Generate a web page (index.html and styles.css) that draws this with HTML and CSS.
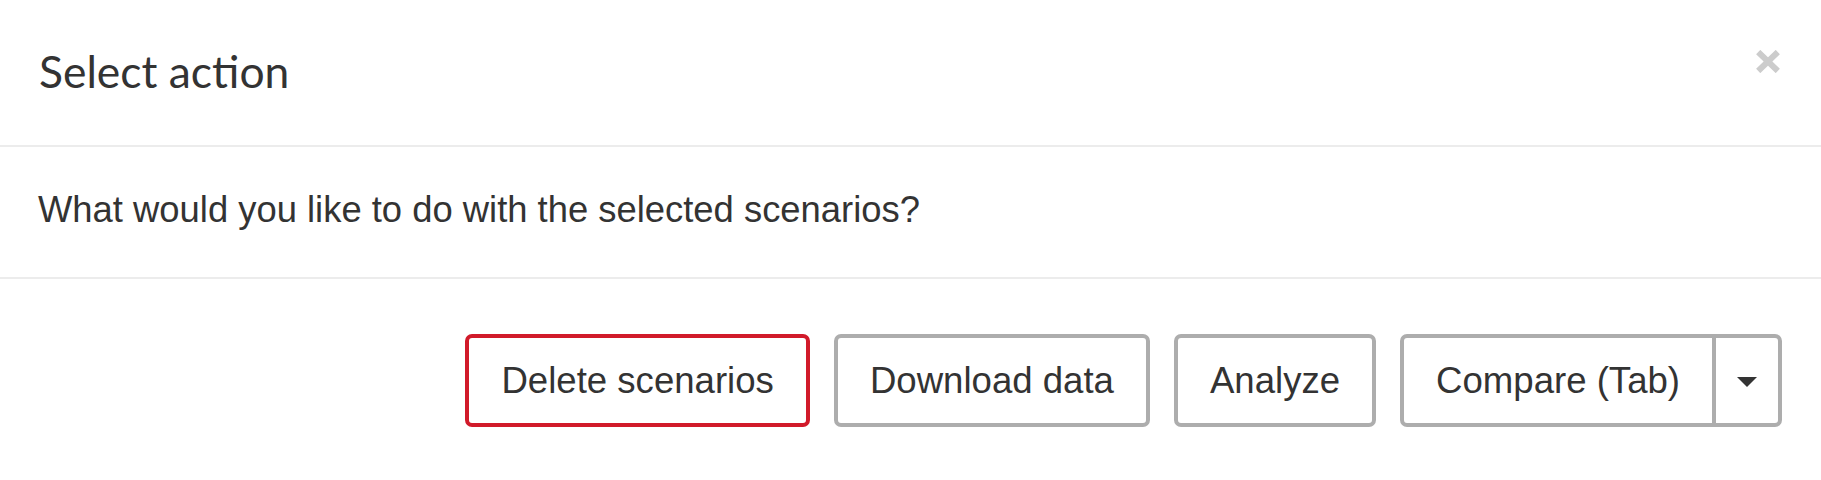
FILE: index.html
```html
<!DOCTYPE html>
<html lang="en">
<head>
<meta charset="utf-8">
<title>Select action</title>
<link rel="stylesheet" href="styles.css">
</head>
<body>
<div class="modal">
  <div class="modal-header">
    <h4 class="modal-title">Select action</h4>
    <button class="close" type="button" aria-label="Close">
      <svg width="24" height="23" viewBox="0 0 24 23"><path d="M2.2 2 L21.8 21 M21.8 2 L2.2 21" stroke="#cccccc" stroke-width="6" fill="none"/></svg>
    </button>
  </div>
  <div class="modal-body">
    <p>What would you like to do with the selected scenarios?</p>
  </div>
  <div class="modal-footer">
    <button class="btn btn-danger" type="button">Delete scenarios</button>
    <button class="btn" type="button">Download data</button>
    <button class="btn" type="button">Analyze</button>
    <div class="btn-group">
      <button class="btn btn-main" type="button">Compare (Tab)</button>
      <button class="btn btn-caret" type="button" aria-label="More"><span class="caret"></span></button>
    </div>
  </div>
</div>
</body>
</html>
```

FILE: styles.css
```css
html, body {
  margin: 0;
  padding: 0;
  background: #ffffff;
}

body {
  font-family: "Liberation Sans", Arial, sans-serif;
  color: #333333;
}

.modal {
  width: 1821px;
  height: 480px;
  overflow: hidden;
  background: #ffffff;
}

.modal-header {
  display: flex;
  justify-content: space-between;
  align-items: flex-start;
  padding: 37px 41px 41px 39px;
  border-bottom: 2px solid #ececec;
}

.modal-title {
  margin: 0;
  font-family: Lato, "Open Sans", sans-serif;
  font-weight: 400;
  font-size: 44.4px;
  line-height: 67px;
  color: #333333;
}

.close {
  margin: 13px 0 0 0;
  padding: 0;
  border: 0;
  background: transparent;
  display: block;
  line-height: 0;
}

.modal-body {
  padding: 37px 39px 41px 38px;
  border-bottom: 2px solid #ececec;
}

.modal-body p {
  margin: 0;
  font-size: 36.4px;
  line-height: 52px;
  color: #333333;
}

.modal-footer {
  display: flex;
  justify-content: flex-end;
  align-items: flex-start;
  gap: 24px;
  padding: 55px 39px 0 39px;
}

.btn {
  font-family: "Liberation Sans", Arial, sans-serif;
  font-size: 36.6px;
  line-height: 53px;
  padding: 16px 32px;
  border: 4px solid #adadad;
  border-radius: 7px;
  background: #ffffff;
  color: #333333;
  white-space: nowrap;
  margin: 0;
}

.btn-danger {
  border-color: #d11a2a;
}

.btn-group {
  display: flex;
}

.btn-main {
  border-radius: 7px 0 0 7px;
}

.btn-caret {
  margin-left: -4px;
  border-radius: 0 7px 7px 0;
  padding: 16px 21px;
  display: flex;
  align-items: center;
  justify-content: center;
  height: 93px;
  box-sizing: border-box;
}

.caret {
  display: block;
  width: 0;
  height: 0;
  border-left: 10px solid transparent;
  border-right: 10px solid transparent;
  border-top: 10.5px solid #333333;
  margin-top: 3px;
}
```
